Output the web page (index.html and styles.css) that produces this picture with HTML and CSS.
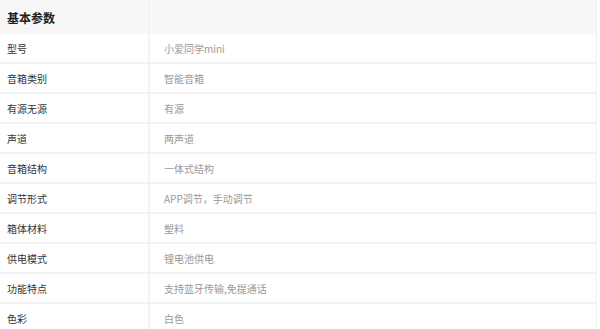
FILE: index.html
```html
<!doctype html>
<html lang="zh-CN">
    <head>
        <meta charset="UTF-8" />
        <meta name="viewport" content="width=device-width, initial-scale=1.0" />
        <title>基本参数</title>
        <link rel="stylesheet" href="styles.css">
    </head>
    <body>
        <table class="params">
            <thead>
                <tr>
                    <th class="param-name">基本参数</th>
                    <th></th>
                </tr>
            </thead>
            <tbody>
                <tr><td class="param-name">型号</td><td class="param-value">小爱同学mini</td></tr>
                <tr><td class="param-name">音箱类别</td><td class="param-value">智能音箱</td></tr>
                <tr><td class="param-name">有源无源</td><td class="param-value">有源</td></tr>
                <tr><td class="param-name">声道</td><td class="param-value">两声道</td></tr>
                <tr><td class="param-name">音箱结构</td><td class="param-value">一体式结构</td></tr>
                <tr><td class="param-name">调节形式</td><td class="param-value">APP调节，手动调节</td></tr>
                <tr><td class="param-name">箱体材料</td><td class="param-value">塑料</td></tr>
                <tr><td class="param-name">供电模式</td><td class="param-value">锂电池供电</td></tr>
                <tr><td class="param-name">功能特点</td><td class="param-value">支持蓝牙传输,免提通话</td></tr>
                <tr><td class="param-name">色彩</td><td class="param-value">白色</td></tr>
            </tbody>
        </table>
    </body>
</html>
```

FILE: styles.css
```css
* {
    margin: 0;
    padding: 0;
    box-sizing: border-box;
}

body {
    font-family: "Noto Sans CJK SC", "Noto Sans", sans-serif;
    background: white;
    color: #333;
}

.params {
    width: 597px;
    border-collapse: collapse;
    border-right: 1px solid #f0f0f0;
}

.params th {
    height: 34px;
    background: #f7f7f7;
    text-align: left;
    font-size: 12px;
    font-weight: bold;
    color: #222;
    padding: 0 7px;
}

.params td {
    height: 30px;
    padding: 0 7px;
    font-size: 10px;
    border-top: 2px solid #f3f3f3;
    vertical-align: middle;
}

.params .param-name {
    width: 149px;
    border-right: 2px solid #f3f3f3;
}

.params td.param-value {
    padding-left: 14px;
    color: #999;
}

.params tbody tr:first-child td {
    height: 29px;
    border-top: none;
}
```
